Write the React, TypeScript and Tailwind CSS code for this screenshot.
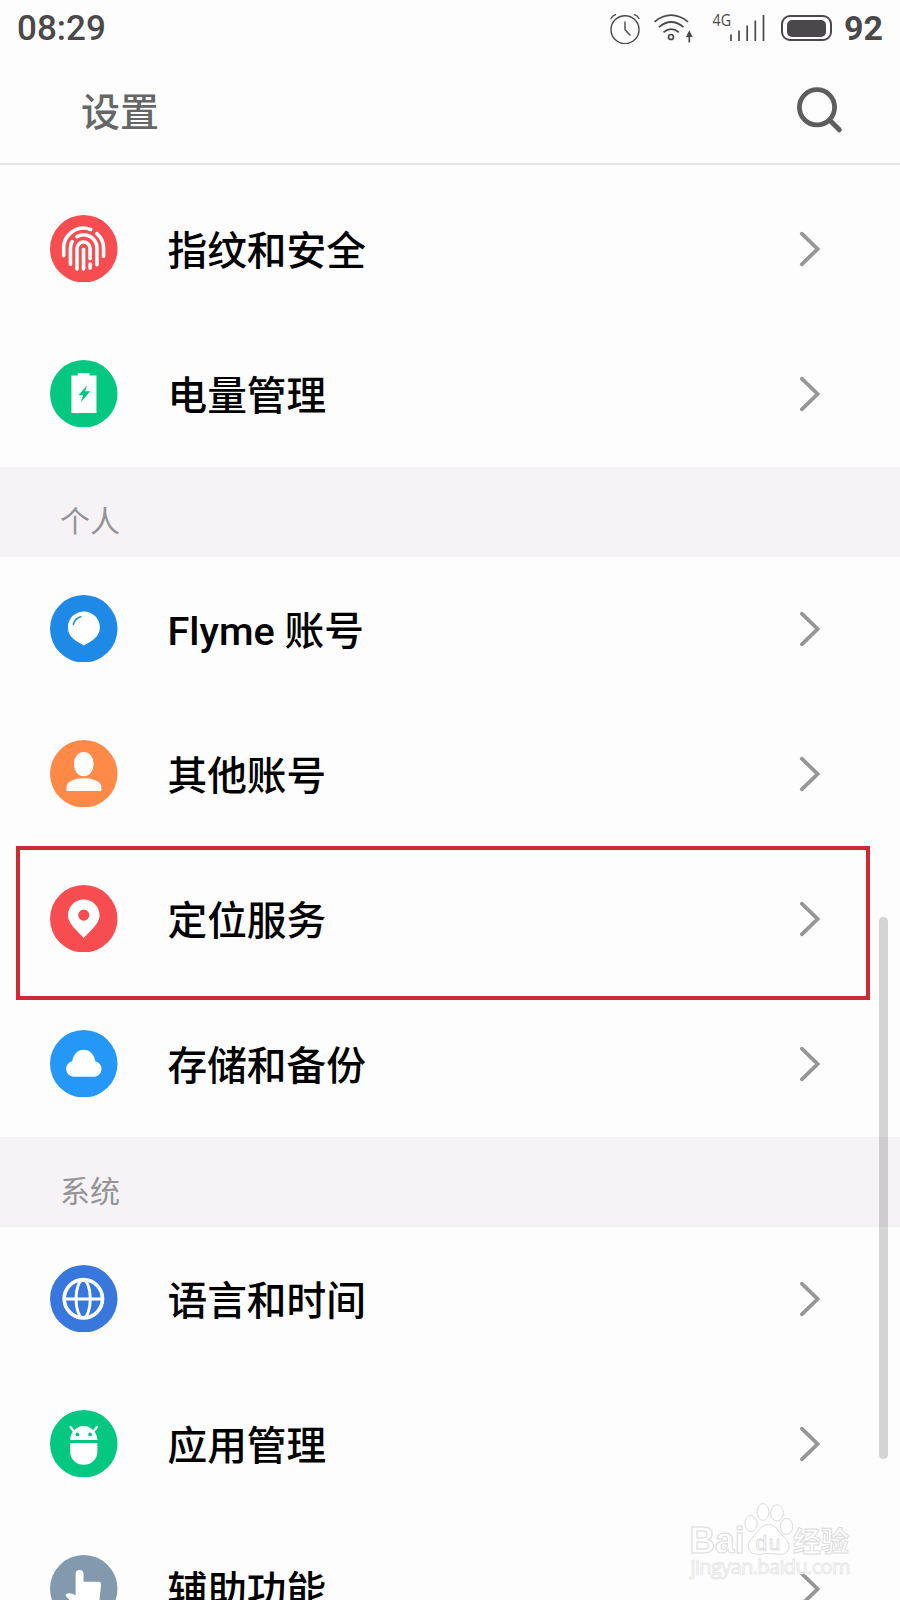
import React from "react";

interface SettingItem {
  id: number;
  label: string;
  color: string;
  icon: React.ReactNode;
  highlighted?: boolean;
}

interface SettingGroup {
  title?: string;
  items: SettingItem[];
}

const FingerprintIcon = () => (
  <g fill="none" stroke="#fff" strokeWidth="3.6" strokeLinecap="round">
    <path d="M13.8 41V34.5A20 20 0 0 1 41 14.6" />
    <path d="M47.3 18.8A20 20 0 0 1 54 34V41.5" />
    <path d="M20.6 49.5V33.5Q20.6 29.5 22.4 26.8" />
    <path d="M27.2 21.8A13.4 13.4 0 0 1 47.3 33.5V50" />
    <path d="M27.2 54.5V33.8A6.6 6.6 0 0 1 40.4 33.8V44" />
    <path d="M40.4 49.5V53.5" />
    <path d="M33.8 34.5V54.5" />
  </g>
);

const BatteryIcon = () => (
  <>
    <path d="M28 13.2H39.8V15.5H46.8V53.3H21.6V15.5H28Z" fill="#fff" />
    <path d="M37.4 25.4L28.6 35.6H33.4L31 42.6L40.6 31.6H35.4Z" fill="#04c781" />
  </>
);

const BalloonIcon = () => (
  <>
    <path d="M34.2 51C30 48 18 44 18 32.6A16.1 16.1 0 0 1 50.2 32.6C50.2 44 38.4 48 34.2 51Z" fill="#fff" />
    <path d="M23.6 29.4Q25.2 23.6 31 22" fill="none" stroke="#1f89e8" strokeWidth="1.6" strokeLinecap="round" />
  </>
);

const PersonIcon = () => (
  <g fill="#fff">
    <rect x="24.2" y="12.1" width="19.6" height="24.4" rx="9.8" ry="11" />
    <path d="M16.6 51.3V48C16.6 42 24 38.6 34 38.6S51.8 42 51.8 48V51.3Z" />
  </g>
);

const PinIcon = () => (
  <path
    fill="#fff"
    fillRule="evenodd"
    d="M34 53.3C29 47.5 18 39 18 30.7A16 16 0 0 1 50 30.7C50 39 39 47.5 34 53.3ZM34 24.7A5.6 5.6 0 1 0 34 35.9A5.6 5.6 0 1 0 34 24.7Z"
  />
);

const CloudIcon = () => (
  <path d="M23.5 47A7.8 7.8 0 0 1 22.4 31.6C23.2 24.6 28 19.8 34 19.8S44.8 24.6 45.7 31.6A7.8 7.8 0 0 1 45 47Z" fill="#fff" />
);

const GlobeIcon = () => (
  <g fill="none" stroke="#fff">
    <circle cx="33.6" cy="34.1" r="19.3" strokeWidth="3.7" />
    <ellipse cx="33.4" cy="34.1" rx="7.2" ry="19" strokeWidth="3" />
    <path d="M14 34.3H53" strokeWidth="3.1" />
  </g>
);

const RobotIcon = () => (
  <>
    <path d="M20.2 30.2C20.6 25.6 22 22.6 24.4 20.4C29.5 14.6 38.5 14.6 43.6 20.4C46 22.6 47.4 25.6 47.8 30.2Z" fill="#fff" />
    <path d="M20.6 17L24 21.6M47.4 17L44 21.6" stroke="#fff" strokeWidth="2.2" strokeLinecap="round" />
    <path d="M20.3 33.3H47.7V42A13.7 13.2 0 0 1 20.3 42Z" fill="#fff" />
    <g fill="#04c781">
      <circle cx="27.6" cy="24.6" r="1.9" />
      <circle cx="40.4" cy="24.6" r="1.9" />
    </g>
  </>
);

const HandIcon = () => (
  <path
    fill="#fff"
    d="M25.8 19A4 4 0 0 1 33.8 19V27H49Q51.6 27 51.4 29.6L49.8 46L46 56H30L16.6 42Q14.6 39.6 17.4 38.8Q21 37.6 25.8 40.6Z"
  />
);

const groups: SettingGroup[] = [
  {
    items: [
      { id: 1, label: "指纹和安全", color: "#f84d50", icon: <FingerprintIcon /> },
      { id: 2, label: "电量管理", color: "#04c781", icon: <BatteryIcon /> },
    ],
  },
  {
    title: "个人",
    items: [
      { id: 3, label: "Flyme 账号", color: "#1f89e8", icon: <BalloonIcon /> },
      { id: 4, label: "其他账号", color: "#ff8a48", icon: <PersonIcon /> },
      { id: 5, label: "定位服务", color: "#f84d50", icon: <PinIcon />, highlighted: true },
      { id: 6, label: "存储和备份", color: "#2497f7", icon: <CloudIcon /> },
    ],
  },
  {
    title: "系统",
    items: [
      { id: 7, label: "语言和时间", color: "#3877dc", icon: <GlobeIcon /> },
      { id: 8, label: "应用管理", color: "#04c781", icon: <RobotIcon /> },
      { id: 9, label: "辅助功能", color: "#8299ae", icon: <HandIcon /> },
    ],
  },
];

const StatusBar = () => (
  <div className="flex h-14 items-center justify-between pl-[17px] pr-[17px] text-[#4a484b]">
    <span className="text-[35px] font-medium leading-none">08:29</span>
    <div className="flex items-center">
      <svg width="32" height="32" viewBox="0 0 32 32" fill="none" stroke="currentColor" strokeWidth="1.4" strokeLinecap="round">
        <circle cx="16" cy="17.7" r="14" />
        <path d="M16 10V17.7L21 23" />
        <path d="M2 6.5Q3.5 3.5 6.5 2.6M30 6.5Q28.5 3.5 25.5 2.6" />
      </svg>
      <svg className="ml-[12px]" width="42" height="32" viewBox="0 0 42 32" fill="none" stroke="currentColor" strokeWidth="1.7">
        <path d="M1.5 9.8Q18 -3.4 35 9.8" />
        <path d="M6 15.2Q18 4.8 30.5 15.2" />
        <path d="M10.5 20.4Q18 14 26 20.4" />
        <circle cx="18" cy="25" r="2.5" />
        <path d="M36.3 30.500V23" />
        <path d="M36.3 18.200L39.600 25H33Z" fill="currentColor" stroke="none" />
      </svg>
      <svg className="ml-[17px] overflow-visible" width="54" height="32" viewBox="0 0 54 32" stroke="currentColor" strokeWidth="1.7">
        <text x="0.5" y="14" fontSize="16" textLength="18.5" lengthAdjust="spacingAndGlyphs" fill="currentColor" stroke="none" className="font-['Open_Sans',sans-serif]">
          4G
        </text>
        <path d="M19 29V22.500M27 29V18.500M35.200 29V13.500M43.300 29V8.500M51.500 29V3" />
      </svg>
      <div className="ml-[15px] flex h-[26px] w-[51px] items-center justify-center rounded-[9px] border-2 border-[#4a484b]">
        <div className="h-[17px] w-[39px] rounded-[5px] bg-[#4a484b]" />
      </div>
      <span className="ml-[12px] text-[34px] font-bold leading-none">92</span>
    </div>
  </div>
);

const Header = () => (
  <div className="flex h-[109px] items-center justify-between border-b-2 border-[#e5e3e6] pl-[81px] pr-[56px]">
    <h1 className="pt-[7px] text-[39px] font-medium leading-none text-[#666]">设置</h1>
    <svg width="48" height="48" viewBox="0 0 48 48" fill="none" stroke="#5e5e5e" strokeLinecap="round">
      <circle cx="21" cy="21.3" r="17.6" strokeWidth="4.8" />
      <path d="M33.5 34L43.3 43.8" strokeWidth="5" />
    </svg>
  </div>
);

const SettingRow: React.FC<{ item: SettingItem }> = ({ item }) => (
  <li className="relative flex h-[145px] items-center pb-0.5 pl-[50px] pr-[78px]">
    <svg className="shrink-0" width="67.5" height="67.5" viewBox="0 0 68 68">
      <circle cx="34" cy="34" r="34" fill={item.color} />
      {item.icon}
    </svg>
    <span className="ml-[50px] flex-1 pt-[7px] text-[39.7px] font-medium leading-none text-black">{item.label}</span>
    <svg width="24" height="36" viewBox="0 0 24 36" fill="none" stroke="#969696" strokeWidth="3.8" strokeLinecap="round">
      <path d="M3.8 2.7L19.6 18L3.8 33.3" />
    </svg>
    {item.highlighted && (
      <div className="pointer-events-none absolute -top-px left-4 h-[154px] w-[854px] border-4 border-[#cd2a33]" />
    )}
  </li>
);

const Watermark = () => (
  <svg
    className="absolute bottom-0 right-[40px]"
    width="180"
    height="100"
    viewBox="0 0 180 100"
    fill="#fff"
    stroke="#dadada"
    strokeWidth="1"
  >
    <text x="9.500" y="53" fontSize="36" textLength="55" lengthAdjust="spacingAndGlyphs" className="font-['Liberation_Sans',sans-serif] font-bold">
      Bai
    </text>
    <ellipse cx="71" cy="23.5" rx="6.2" ry="8" />
    <ellipse cx="83" cy="12" rx="6" ry="8.4" />
    <ellipse cx="97" cy="13" rx="6.4" ry="8.2" />
    <ellipse cx="106.5" cy="26.5" rx="6.2" ry="8" />
    <path d="M88.5 24.5C96 24.5 98 31 103 36C108 41 110 44 108.500 49C106 57 97 53.500 88.500 53.500S72 57 69 49C67 44 69 41 74 36C79 31 81 24.500 88.500 24.500Z" />
    <text x="75.500" y="49.500" fontSize="21" textLength="25" strokeWidth="0.8" className="font-['Liberation_Sans',sans-serif]">
      du
    </text>
    <text x="113" y="51.500" fontSize="28" textLength="56" strokeWidth="0.9" className="font-['Noto_Sans_CJK_SC',sans-serif] font-bold">
      经验
    </text>
    <text x="10.500" y="74" fontSize="20" textLength="160" stroke="#e6e6e6" strokeWidth="0.9" className="font-['Open_Sans',sans-serif]">
      jingyan.baidu.com
    </text>
  </svg>
);

const App = () => (
  <div className="relative h-[1600px] w-[900px] overflow-hidden bg-[#fdfdfd] font-['Roboto','Noto_Sans_CJK_SC',sans-serif]">
    <StatusBar />
    <Header />
    <main className="pt-3">
      {groups.map((group, index) => (
        <section key={index}>
          {group.title && (
            <h2 className="flex h-[90px] items-center bg-[#f5f3f6] pl-[60px] pt-5 text-[30px] leading-none text-[#959396]">
              {group.title}
            </h2>
          )}
          <ul>
            {group.items.map((item) => (
              <SettingRow key={item.id} item={item} />
            ))}
          </ul>
        </section>
      ))}
    </main>
    <div className="absolute left-[879px] top-[917px] h-[542px] w-[9px] rounded-full bg-black/16" />
    <Watermark />
  </div>
);

export default App;
